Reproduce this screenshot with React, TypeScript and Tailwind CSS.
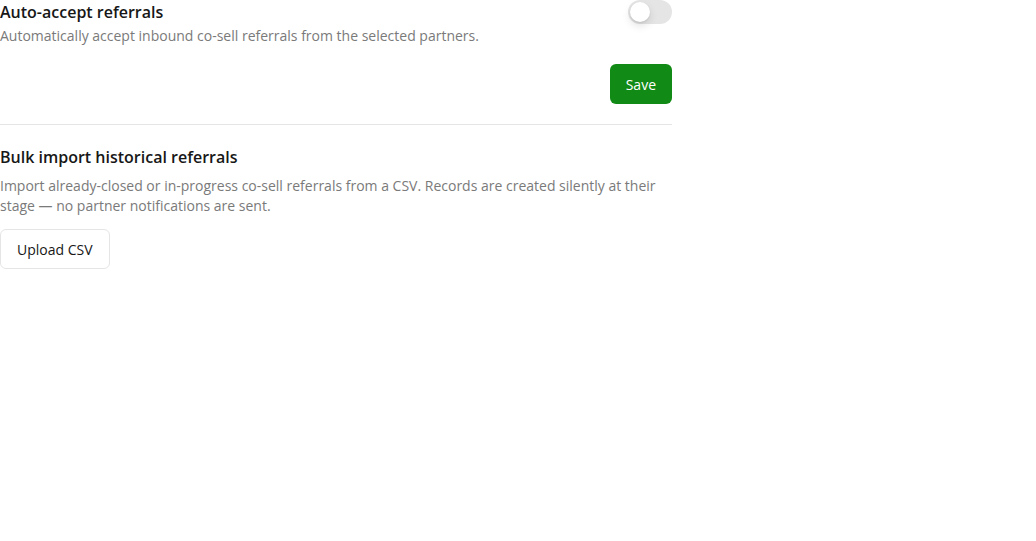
export default function App() {
  return (
    <div className="w-[672px] bg-white font-['Open_Sans',sans-serif] text-[#171717]">
      <section className="pb-5">
        <div className="flex items-start justify-between gap-4">
          <div>
            <h3 className="text-base font-semibold leading-6">Auto-accept referrals</h3>
            <p className="mt-0.5 text-sm leading-5 text-[#7a7a7a]">
              Automatically accept inbound co-sell referrals from the selected partners.
            </p>
          </div>
          <button
            type="button"
            role="switch"
            aria-checked="false"
            className="relative inline-flex h-6 w-11 shrink-0 items-center rounded-full bg-[#e5e5e5] p-0.5"
          >
            <span className="h-5 w-5 rounded-full bg-white shadow-[0_4px_8px_rgba(0,0,0,0.12),0_1px_2px_rgba(0,0,0,0.08)]" />
          </button>
        </div>
        <div className="mt-[18px] flex justify-end">
          <button
            type="button"
            className="h-10 rounded-md bg-[#128a16] px-4 pt-px text-sm font-medium text-white"
          >
            Save
          </button>
        </div>
      </section>

      <section className="border-t border-[#e5e5e5] pt-5">
        <h3 className="text-base font-semibold leading-6">Bulk import historical referrals</h3>
        <p className="mt-[7px] text-sm leading-5 text-[#7a7a7a]">
          Import already-closed or in-progress co-sell referrals from a CSV. Records are created silently at their
          stage — no partner notifications are sent.
        </p>
        <button
          type="button"
          className="mt-[13px] h-10 rounded-md border border-[#e5e5e5] bg-white px-4 pt-px text-sm font-medium text-[#171717]"
        >
          Upload CSV
        </button>
      </section>
    </div>
  );
}
